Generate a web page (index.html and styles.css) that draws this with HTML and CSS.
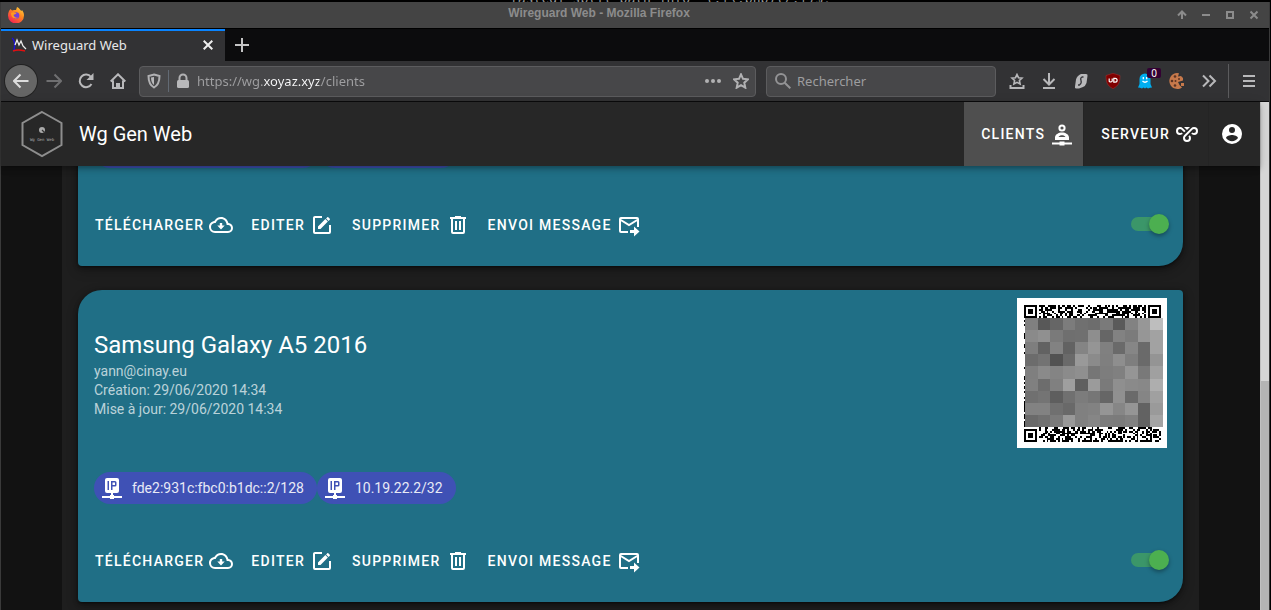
FILE: index.html
```html
<!DOCTYPE html>
<html lang="fr">
<head>
<meta charset="utf-8">
<title>Wireguard Web</title>
<link rel="stylesheet" href="styles.css">
</head>
<body>
<svg class="sprite" aria-hidden="true">
  <symbol id="i-cloud" viewBox="0 0 24 24"><path d="M19.35,10.03C18.67,6.59 15.64,4 12,4C9.11,4 6.6,5.64 5.35,8.03C2.34,8.36 0,10.9 0,14A6,6 0 0,0 6,20H19A5,5 0 0,0 24,15C24,12.36 21.95,10.22 19.35,10.03M19,18H6A4,4 0 0,1 2,14C2,11.95 3.53,10.24 5.56,10.03L6.63,9.92L7.13,8.97C8.08,7.14 9.94,6 12,6C14.62,6 16.88,7.86 17.39,10.43L17.69,11.93L19.22,12.04C20.78,12.14 22,13.45 22,15A3,3 0 0,1 19,18M13.2,10H10.8V12.5H8.3L12,16.5L15.7,12.5H13.2V10Z"/></symbol>
  <symbol id="i-edit" viewBox="0 0 24 24"><path d="M5,3C3.89,3 3,3.89 3,5V19A2,2 0 0,0 5,21H19A2,2 0 0,0 21,19V12H19V19H5V5H12V3H5M17.78,4C17.61,4 17.43,4.07 17.3,4.2L16.08,5.41L18.58,7.91L19.8,6.7C20.06,6.44 20.06,6 19.8,5.75L18.25,4.2C18.12,4.07 17.95,4 17.78,4M15.37,6.12L8,13.5V16H10.5L17.87,8.62L15.37,6.12Z"/></symbol>
  <symbol id="i-trash" viewBox="0 0 24 24"><path d="M9,3V4H4V6H5V19A2,2 0 0,0 7,21H17A2,2 0 0,0 19,19V6H20V4H15V3H9M7,6H17V19H7V6M9,8V17H11V8H9M13,8V17H15V8H13Z"/></symbol>
  <symbol id="i-mail" viewBox="0 0 24 24"><path d="M11 19H4a1 1 0 0 1-1-1V6a1 1 0 0 1 1-1h16a1 1 0 0 1 1 1v8M3 6.500l9 5.500 9-5.500" fill="none" stroke="currentColor" stroke-width="2"/><path d="M13 17h4v-3.500l5.500 5-5.500 5V20h-4z"/></symbol>
  <symbol id="i-ip" viewBox="0 0 24 24"><path fill-rule="evenodd" d="M7 2h10a2 2 0 0 1 2 2v11a2 2 0 0 1-2 2h-4v2h1v1h8v2h-8v1h-4v-1H2v-2h8v-1h1v-2H7a2 2 0 0 1-2-2V4a2 2 0 0 1 2-2zM7.500 5v9H9V5zM11 5v9h1.500v-3.500H15a1.500 1.500 0 0 0 1.500-1.500V6.500A1.500 1.500 0 0 0 15 5zm1.500 1.500H15V9h-2.500z"/></symbol>
</svg>
<div class="backdrop">fastcgi_split_path_info ^(.+\.php)(/.+)$;</div>
<div class="window">
  <header class="titlebar">
    <svg width="16" height="16" viewBox="0 0 16 16" aria-hidden="true">
      <defs><linearGradient id="fox" x1="1" y1="0" x2="0.300" y2="1"><stop offset="0" stop-color="#ffe24a"/><stop offset=".45" stop-color="#ff8a1f"/><stop offset="1" stop-color="#f5254f"/></linearGradient></defs>
      <path d="M1 4 2.500 2 4 3.500 6 3 8 3 9 0c3 1.500 3 3 4.500 4L14 3c1.500 2 2 3.500 2 5.500A8 8 0 0 1 0 8.500C0 7 .3 5.500 1 4z" fill="url(#fox)"/>
      <circle cx="8" cy="8.500" r="3.300" fill="#7542d8"/><path d="M3 6c2-1.500 4 0 5.500 0-.5 1.500-2 1-3 2 .5 2 2.500 3 4.500 2.500-2 2-7 1-7-4.500z" fill="#ff9a20"/>
    </svg>
    <div class="window-title">Wireguard Web - Mozilla Firefox</div>
    <div class="window-buttons">
      <button aria-label="Enrouler"><svg viewBox="0 0 10 10"><path d="M5 9V2M1 5.500 5 1.500l4 4"/></svg></button>
      <button aria-label="Réduire"><svg viewBox="0 0 10 10"><path d="M1 5h8"/></svg></button>
      <button aria-label="Agrandir"><svg viewBox="0 0 10 10"><path d="M2 2h6v6H2z"/></svg></button>
      <button aria-label="Fermer"><svg viewBox="0 0 10 10"><path d="m1.500 1.500 7 7m0-7-7 7"/></svg></button>
    </div>
  </header>
  <div class="tabs">
    <div class="tab">
      <svg width="16" height="16" viewBox="0 0 16 16" fill="none" aria-hidden="true"><path d="M1 1c3 2 3 8 2 13" stroke="#1b10d8" stroke-width="1.500"/><path d="M2 14c5-2 8-1 12 0" stroke="#e01010" stroke-width="1.500"/><path d="M4 8 6 3l2 5 2-4 2 5 3 3" stroke="#eee" stroke-width="1.300"/></svg>
      <span class="tab-name">Wireguard Web</span>
      <button class="tab-close" aria-label="Fermer l’onglet"><svg width="10" height="10" viewBox="0 0 10 10"><path d="m.7.7 8.600 8.600m0-8.600L.7 9.300" stroke="#eee" stroke-width="2"/></svg></button>
    </div>
    <button class="tab-new" aria-label="Nouvel onglet"><svg width="14" height="14" viewBox="0 0 14 14"><path d="M7 0v14M0 7h14" stroke="#c4c4c4" stroke-width="2"/></svg></button>
  </div>
  <nav class="toolbar">
    <button class="tool back" aria-label="Précédent"><svg viewBox="0 0 16 16"><path d="M15.500 8H1M7.500 1.500 1 8l6.500 6.500"/></svg></button>
    <button class="tool forward" aria-label="Suivant"><svg viewBox="0 0 16 16"><path d="M.5 8H15M8.500 1.500 15 8l-6.500 6.500"/></svg></button>
    <button class="tool" aria-label="Actualiser"><svg viewBox="0 0 16 16"><path d="M13.500 11A6.300 6.300 0 1 1 13 4"/><path class="solid" d="M15.500 0v7H8.500z"/></svg></button>
    <button class="tool" aria-label="Accueil"><svg viewBox="0 0 16 16"><path d="M.7 8.500 8 1.300l7.300 7.200M3 7.500V15h10V7.500M7 15v-4h2v4"/></svg></button>
    <div class="field url">
      <svg width="16" height="16" viewBox="0 0 16 16" class="line"><path d="M8 1.500 13.500 3c0 5-1 9-5.500 11.500C3.500 12 2.500 8 2.500 3z"/><path class="solid" d="M5 4.500 8 4v8C6 10.500 5 8 5 4.500z"/></svg>
      <span class="url-split"></span>
      <svg width="16" height="16" viewBox="0 0 16 16" class="line"><path d="M4.500 8V5a3.500 3.500 0 0 1 7 0v3"/><rect class="solid" x="2" y="7" width="12" height="8" rx="1.500"/></svg>
      <input class="url-input" type="text" aria-label="Adresse" value="https://wg.xoyaz.xyz/clients">
      <button class="mini" aria-label="Actions de la page"><svg width="16" height="16" viewBox="0 0 16 16" fill="#b1b1b3"><circle cx="2" cy="8" r="2"/><circle cx="8" cy="8" r="2"/><circle cx="14" cy="8" r="2"/></svg></button>
      <button class="mini" aria-label="Marque-page"><svg width="16" height="16" viewBox="0 0 16 16" class="line"><path d="m8 1.300 2 4.500 5 .5-3.700 3.400 1 5L8 12.200l-4.300 2.500 1-5L1 6.300l5-.5z"/></svg></button>
    </div>
    <div class="field search">
      <svg width="16" height="16" viewBox="0 0 16 16" class="line dim"><circle cx="6" cy="6" r="5"/><path d="m9.700 9.700 5.600 5.600"/></svg>
      <input class="search-input" type="text" aria-label="Rechercher" placeholder="Rechercher">
    </div>
    <div class="extensions">
      <button class="tool" aria-label="Marque-pages"><svg viewBox="0 0 16 16"><path d="m8 1.500 1.500 3.200 3.500.4-2.600 2.400.7 3.500-3.100-1.700L4.900 11l.7-3.500L3 5.100l3.500-.4z" stroke-width="1.600"/><path d="M1.500 12v3h13v-3"/></svg></button>
      <button class="tool" aria-label="Téléchargements"><svg viewBox="0 0 16 16"><path d="M8 0v11M2.500 6 8 11.500 13.500 6M2 15h12"/></svg></button>
      <button class="tool" aria-label="Startpage"><svg viewBox="0 0 16 16"><path class="solid" d="M8 1h5q2 0 1.500 2l-1 7q-1 3-3.500 4l-4 1.500H3q-1.500 0-1-2l1-7q1-4 5-5.500z"/><path d="M10.500 4H9Q7 5 8 7.500T6.500 12H5" stroke="#38383d" stroke-width="1.300"/></svg></button>
      <button class="tool" aria-label="uBlock Origin"><svg viewBox="0 0 16 16"><path d="M8 .3 15 2.500c0 6.500-1 10-7 13.200C2 12.500 1 9 1 2.500z" fill="#800000" stroke="#a33" stroke-width=".5"/><path d="M4.200 5.500v2.700q1.700 1.600 3 0V5.500" stroke="#fff" stroke-width="1.200"/><path d="M8.800 5.300h1.400a1.900 1.900 0 0 1 0 3.800H8.800z" stroke="#fff" stroke-width="1.200"/></svg></button>
      <button class="tool" aria-label="Ghostery"><svg viewBox="0 0 16 16"><path d="M2.500 6a5.500 5.500 0 0 1 11 0V11l1.500 3.500-2 .3L11 15.500l-1.500-1L8 15.500l-1.500-1L5 15.500l-2-.7-2-.3L2.500 11z" fill="#00aef0" stroke="none"/><path d="M6.300 4v2.200M9.700 4v2.200M5.500 8q2.500 2.500 5 0" stroke="#fff" stroke-width="1.300"/></svg><span class="badge">0</span></button>
      <button class="tool" aria-label="Cookies"><svg viewBox="0 0 16 16"><path d="M8 0a8 8 0 1 0 5 14.500L10.500 12 9 9l5-1.500V5l-2-2-3 .5L10 .3z" fill="#c7794b" stroke="none"/><path d="M12 10h3v3h-3z" fill="#c7794b" stroke="none"/><g fill="#5c3322" stroke="none"><circle cx="6" cy="3.500" r="1.300"/><circle cx="3" cy="8" r="1.300"/><circle cx="6.500" cy="8" r="1"/><circle cx="6" cy="12.500" r="1.300"/><circle cx="10" cy="6" r="1"/></g></svg></button>
      <button class="tool" aria-label="Plus d’outils"><svg viewBox="0 0 16 16"><path d="m2 2.500 5.500 5.500L2 13.500M8.500 2.500 14 8l-5.500 5.500"/></svg></button>
    </div>
    <button class="tool menu" aria-label="Menu"><svg viewBox="0 0 16 16"><path d="M2 3h12M2 8h12M2 13h12"/></svg></button>
  </nav>
  <div class="viewport">
    <div class="app">
      <header class="appbar">
        <svg class="logo" width="42" height="48" viewBox="0 0 42 48" aria-hidden="true"><path d="M21 2 40.500 13v22L21 46 1.500 35V13z" fill="none" stroke="#8e8e8e" stroke-width="2"/><circle cx="21" cy="20" r="3" fill="#aaa"/><path d="m21 20 3 3" stroke="#333" stroke-width="1.300"/><text x="21" y="31" text-anchor="middle">Wg Gen Web</text></svg>
        <h1 class="brand">Wg Gen Web</h1>
        <a class="nav-link active" href="#clients">Clients
          <svg viewBox="0 0 24 24"><circle cx="12" cy="6" r="2.600" fill="none" stroke="currentColor" stroke-width="2"/><path fill-rule="evenodd" d="M5 18v-2.500c0-3 3.500-5 7-5s7 2 7 5V18zM8.500 15h7c-.7-1.200-2-1.700-3.500-1.700s-2.800.5-3.500 1.700zM2 20.500h7.500v-1h5v1H22v2h-7.500v1h-5v-1H2z"/></svg></a>
        <a class="nav-link" href="#server">Serveur
          <svg viewBox="0 0 24 24"><path d="M9,5H15L12,8L9,5M10.5,14.66C10.2,15 10,15.5 10,16A2,2 0 0,0 12,18A2,2 0 0,0 14,16C14,15.45 13.78,14.95 13.41,14.59L14.83,13.17C15.55,13.9 16,14.9 16,16A4,4 0 0,1 12,20A4,4 0 0,1 8,16C8,14.93 8.42,13.96 9.1,13.25L9.09,13.24L16.17,6.17C16.89,5.45 17.89,5 19,5A4,4 0 0,1 23,9A4,4 0 0,1 19,13C17.9,13 16.9,12.55 16.17,11.83L17.59,10.41C17.95,10.78 18.45,11 19,11A2,2 0 0,0 21,9A2,2 0 0,0 19,7C18.45,7 17.95,7.22 17.59,7.59L10.5,14.66M6.41,7.59C6.05,7.22 5.55,7 5,7A2,2 0 0,0 3,9A2,2 0 0,0 5,11C5.55,11 6.05,10.78 6.41,10.41L7.83,11.83C7.1,12.55 6.1,13 5,13A4,4 0 0,1 1,9A4,4 0 0,1 5,5C6.11,5 7.11,5.45 7.83,6.17L10.59,8.93L9.17,10.34L6.41,7.59Z"/></svg></a>
        <button class="account" aria-label="Compte"><svg viewBox="0 0 24 24"><path d="M12,19.2C9.5,19.2 7.29,17.92 6,16C6.03,14 10,12.9 12,12.9C14,12.9 17.97,14 18,16C16.71,17.92 14.5,19.2 12,19.2M12,5A3,3 0 0,1 15,8A3,3 0 0,1 12,11A3,3 0 0,1 9,8A3,3 0 0,1 12,5M12,2A10,10 0 0,0 2,12A10,10 0 0,0 12,22A10,10 0 0,0 22,12C22,6.47 17.5,2 12,2Z"/></svg></button>
      </header>
      <main class="content">
        <div class="list">
          <article class="card">
            <div class="chips"><span class="chip chip-wide"></span><span class="chip chip-short"></span></div>
            <div class="actions">
              <button class="action">Télécharger <svg><use href="#i-cloud"/></svg></button>
              <button class="action">Editer <svg><use href="#i-edit"/></svg></button>
              <button class="action">Supprimer <svg><use href="#i-trash"/></svg></button>
              <button class="action">Envoi message <svg><use href="#i-mail"/></svg></button>
              <input class="switch" type="checkbox" role="switch" aria-label="Activer le client" checked>
            </div>
          </article>
          <article class="card">
            <div class="card-head">
              <div class="info">
                <h2 class="name">Samsung Galaxy A5 2016</h2>
                <p class="meta">yann@cinay.eu<br>Création: 29/06/2020 14:34<br>Mise à jour: 29/06/2020 14:34</p>
              </div>
              <svg class="qr" width="150" height="150" viewBox="0 0 150 150" role="img" aria-label="QR code"></svg>
            </div>
            <div class="chips">
              <span class="chip"><svg><use href="#i-ip"/></svg>fde2:931c:fbc0:b1dc::2/128</span>
              <span class="chip"><svg><use href="#i-ip"/></svg>10.19.22.2/32</span>
            </div>
            <div class="actions">
              <button class="action">Télécharger <svg><use href="#i-cloud"/></svg></button>
              <button class="action">Editer <svg><use href="#i-edit"/></svg></button>
              <button class="action">Supprimer <svg><use href="#i-trash"/></svg></button>
              <button class="action">Envoi message <svg><use href="#i-mail"/></svg></button>
              <input class="switch" type="checkbox" role="switch" aria-label="Activer Samsung Galaxy A5 2016" checked>
            </div>
          </article>
        </div>
      </main>
    </div>
    <div class="scrollbar"><div class="thumb"></div></div>
  </div>
</div>
<script src="qr.js"></script>
</body>
</html>
```

FILE: styles.css
```css
* { box-sizing: border-box; }
body {
  margin: 0;
  height: 100vh;
  display: flex;
  flex-direction: column;
  overflow: hidden;
  background: #000;
  font-family: Roboto, sans-serif;
  color: #fff;
}
button {
  border: 0;
  padding: 0;
  background: none;
  color: inherit;
  font: inherit;
  display: flex;
  align-items: center;
  justify-content: center;
}
svg { flex: none; display: block; }
.sprite { display: none; }

.backdrop {
  height: 2px;
  flex: none;
  overflow: hidden;
  display: flex;
  align-items: flex-end;
  padding-left: 510px;
  font: 13px/7px "DejaVu Sans Mono", monospace;
  color: #999;
  white-space: pre;
}
.window {
  flex: 1;
  min-height: 0;
  display: flex;
  flex-direction: column;
  margin-right: 1px;
  border: solid #3a3a3a;
  border-width: 0 1px;
}

/* Window frame */
.titlebar {
  flex: none;
  height: 26px;
  display: flex;
  align-items: center;
  padding: 0 3px 0 7px;
  background: #444;
}
.window-title {
  flex: 1;
  text-align: center;
  font: bold 12px/22px "Liberation Sans", Arial, sans-serif;
  color: #8c8c8c;
  padding: 0 0 4px 4px;
}
.window-buttons { display: flex; }
.window-buttons button { width: 24px; height: 24px; }
.window-buttons svg { width: 10px; height: 10px; fill: none; stroke: #8c8c8c; stroke-width: 2; }

/* Tabs */
.tabs {
  flex: none;
  height: 33px;
  display: flex;
  background: #0c0c0d;
  border-top: 1px solid #000;
  font: 13px/18px "Noto Sans", sans-serif;
}
.tab {
  width: 224px;
  display: flex;
  align-items: center;
  gap: 5px;
  padding: 0 10px 2px;
  background: #323234;
  border-top: 2px solid #0a84ff;
}
.tab-name { flex: 1; color: #e8e8ea; }
.tab-close { width: 14px; height: 20px; }
.tab-new { width: 34px; }

/* Navigation toolbar */
.toolbar {
  flex: none;
  height: 41px;
  display: flex;
  align-items: center;
  padding-left: 4px;
  background: #323234;
  border-bottom: 1px solid #0c0c0d;
}
.tool { position: relative; width: 32px; height: 32px; flex: none; }
.tool svg, .line { fill: none; stroke: #b8b8ba; stroke-width: 2; }
.tool svg { width: 16px; height: 16px; }
.tool .solid, .solid { fill: #b8b8ba; stroke: none; }
.line { stroke: #b1b1b3; }
.line.dim { stroke: #939395; }
.tool.back { margin-right: 1px; border-radius: 50%; background: #666; box-shadow: 0 0 0 1px #222; }
.back svg { stroke: #ddd; }
.forward svg { stroke: #6f6f71; }
.field {
  height: 31px;
  display: flex;
  align-items: center;
  border: 1px solid #5c5c5e;
  border-radius: 4px;
  background: #474749;
  font: 13px/18px "Noto Sans", sans-serif;
}
.field input {
  flex: 1;
  min-width: 0;
  border: 0;
  padding: 0;
  outline: 0;
  height: 20px;
  font: inherit;
  background-color: transparent;
}
.url { flex: 1; gap: 6px; padding: 0 3px 0 6px; margin-left: 5px; }
.url-split { width: 1px; height: 22px; background: #626a74; }
.field .url-input {
  color: transparent;
  background-image: linear-gradient(to right, #a0a0a2 67px, #f9f9fa 67px, #f9f9fa 122px, #a0a0a2 122px);
  -webkit-background-clip: text;
  background-clip: text;
}
.mini { width: 22px; height: 22px; }
.search { width: 230px; gap: 6px; padding: 0 8px; margin-left: 10px; }
.search-input::placeholder { color: #9d9d9f; opacity: 1; }
.extensions { display: flex; margin-left: 5px; }
.badge {
  position: absolute;
  top: 3px;
  left: 18px;
  width: 14px;
  height: 10px;
  border-radius: 2px;
  background: #330033;
  color: #fff;
  font: 10px/10px "Noto Sans", sans-serif;
}
.tool.menu { width: 41px; height: 34px; margin-left: 3px; border-left: 1px solid #5c5c5e; }

/* Page */
.viewport { flex: 1; min-height: 0; display: flex; }
.app { flex: 1; display: flex; flex-direction: column; background: #121212; }
.scrollbar {
  width: 9px;
  display: flex;
  flex-direction: column;
  justify-content: flex-end;
  background: #d6d6d6;
  border-left: 1px solid #c0c0c0;
}
.thumb { height: 45%; background: #b4b4b4; }
.appbar {
  flex: none;
  z-index: 1;
  height: 64px;
  display: flex;
  align-items: stretch;
  padding-left: 20px;
  background: #272727;
  box-shadow: 0 2px 4px -1px rgba(0,0,0,.2), 0 4px 5px rgba(0,0,0,.14), 0 1px 10px rgba(0,0,0,.12);
}
.logo { align-self: center; }
.logo text { font: 4px "DejaVu Sans Mono", monospace; fill: #aaa; }
.brand { flex: 1; margin: 0 0 0 16px; font-size: 20px; font-weight: 400; line-height: 64px; }
.nav-link, .action {
  display: flex;
  align-items: center;
  gap: 5px;
  font-size: 14px;
  font-weight: 500;
  letter-spacing: .09em;
  text-transform: uppercase;
  color: #fff;
  text-decoration: none;
}
.nav-link { padding: 0 9px 0 17px; border-right: 1px solid #242424; }
.nav-link.active { background: #4f4f4f; }
.nav-link svg, .account svg, .action svg { width: 24px; height: 24px; fill: currentColor; }
.account { padding: 0 16px 0 11px; }

.content {
  flex: 1;
  min-height: 0;
  overflow: hidden;
  display: flex;
  flex-direction: column;
  justify-content: flex-end;
  padding: 0 61px;
}
.list {
  display: flex;
  flex-direction: column;
  gap: 24px;
  padding: 0 16px 8px;
  background: #1e1e1e;
}
.card {
  padding: 8px 16px 23px;
  border-radius: 24px 4px;
  background: #206f86;
  box-shadow: 0 3px 1px -2px rgba(0,0,0,.2), 0 2px 2px rgba(0,0,0,.14), 0 1px 5px rgba(0,0,0,.3), 0 4px 12px rgba(0,0,0,.3);
}
.card-head { display: flex; justify-content: space-between; margin-bottom: 24px; }
.info { padding-top: 31px; }
.name { margin: 0; font-size: 24px; line-height: 32px; font-weight: 400; }
.meta { margin: 1px 0 0; font-size: 14px; line-height: 19px; color: rgba(255,255,255,.7); }
.qr { background: #fff; shape-rendering: crispEdges; }
.chips { display: flex; margin-bottom: 39px; }
.chip {
  height: 32px;
  display: flex;
  align-items: center;
  gap: 8px;
  padding: 0 13px 0 6px;
  border-radius: 16px;
  background: #3f51b5;
  font-size: 14px;
  color: #e8eaf6;
}
.chip svg { width: 24px; height: 24px; fill: #fff; }
.chip-wide { width: 225px; }
.chip-short { width: 138px; }
.actions { display: flex; align-items: center; gap: 17px; height: 36px; }
.action { height: 36px; padding-left: 1px; }
.switch {
  appearance: none;
  margin: 0 -2px 2px auto;
  width: 38px;
  height: 20px;
  display: flex;
  align-items: center;
  justify-content: flex-end;
}
.switch::before {
  content: "";
  width: 34px;
  height: 14px;
  margin-right: -16px;
  border-radius: 7px;
  background: #3b9669;
}
.switch::after {
  content: "";
  width: 20px;
  height: 20px;
  border-radius: 50%;
  background: #4caf50;
  box-shadow: 0 2px 4px rgba(0,0,0,.35);
}
```

FILE: qr.js
```js
const qr = document.querySelector(".qr");
const MODULES = 73;
const ORIGIN = 7;
const SIZE = 137 / MODULES;

function rect(x, y, w, h, fill) {
  const r = document.createElementNS("http://www.w3.org/2000/svg", "rect");
  Object.entries({ x, y, width: w, height: h, fill }).forEach(([k, v]) => r.setAttribute(k, v));
  qr.append(r);
}

function finder(col, row) {
  [[0, 7, "#000"], [1, 5, "#fff"], [2, 3, "#000"]].forEach(([inset, n, fill]) =>
    rect(ORIGIN + (col + inset) * SIZE, ORIGIN + (row + inset) * SIZE, n * SIZE, n * SIZE, fill));
}

let seed = 29062020;
function random() {
  seed = (seed * 1103515245 + 12345) % 2147483648;
  return seed / 2147483648;
}

for (let row = 0; row < MODULES; row++) {
  for (let col = 0; col < MODULES; col++) {
    const nearLeft = col < 8, nearRight = col > 64, nearTop = row < 8, nearBottom = row > 64;
    if ((nearLeft && (nearTop || nearBottom)) || (nearRight && nearTop)) continue;
    if (random() < 0.5) rect(ORIGIN + col * SIZE, ORIGIN + row * SIZE, SIZE, SIZE, "#000");
  }
}
finder(0, 0);
finder(66, 0);
finder(0, 66);

const columns = [8, 21, 33, 46, 58, 71, 83, 96, 108, 121, 133, 146];
const rows = [20, 32, 44, 56, 68, 81, 93, 105, 117, 129];
const greys = [
  "80 58 66 7c 70 6d 7a 5a 82 97 be",
  "8a 90 7a 6f 70 8e 66 82 7b 96 a2",
  "7e 62 82 62 84 95 80 6a 86 6a a2",
  "6c 73 52 6a 99 8b 7f 8e 7e 6a 94",
  "7f 8a 84 8b 8f 76 7d 80 95 79 a0",
  "80 6d 80 9f 5f 9b 7a 8f 8a 88 ae",
  "70 74 5e 70 7c 76 66 90 6a 85 a0",
  "82 82 70 69 80 82 95 86 95 62 9a",
  "6a 70 7a 99 80 86 7c 7b 80 62 a4",
];
greys.forEach((line, r) => line.split(" ").forEach((g, c) =>
  rect(columns[c], rows[r], columns[c + 1] - columns[c], rows[r + 1] - rows[r], "#" + g.repeat(3))));
```
